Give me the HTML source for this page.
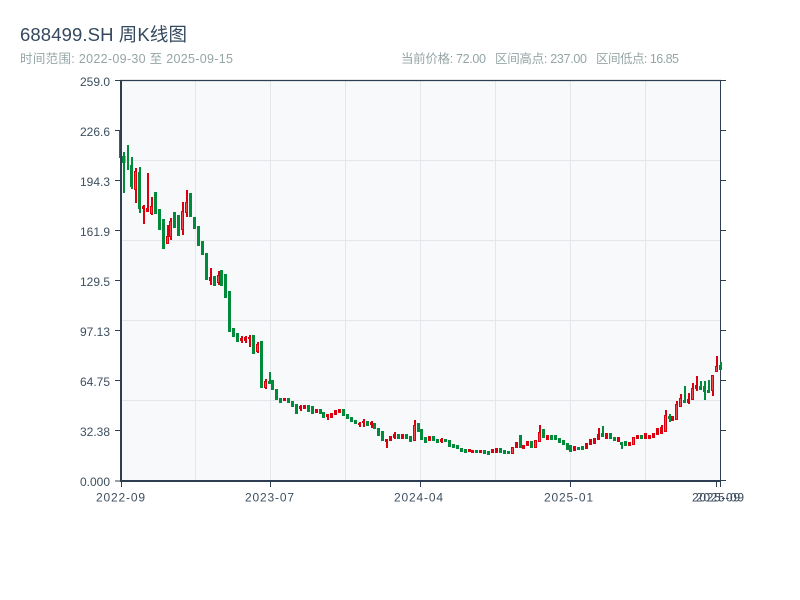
<!DOCTYPE html>
<html lang="zh">
<head>
<meta charset="utf-8">
<title>688499.SH 周K线图</title>
<style>
html,body{margin:0;padding:0;background:#fff;width:800px;height:600px;overflow:hidden}
svg{display:block}
text{font-family:"Liberation Sans","Noto Sans CJK SC",sans-serif}
</style>
</head>
<body>
<svg width="800" height="600" viewBox="0 0 800 600" xmlns="http://www.w3.org/2000/svg">
<rect x="121" y="81" width="599" height="400" fill="#f7f9fb"/>
<path fill="none" stroke="#e3e6ea" stroke-width="1" d="M121 160.5H720M121 240.5H720M121 320.5H720M121 400.5H720M195.5 81V481M270.5 81V481M345.5 81V481M420.5 81V481M495.5 81V481M570.5 81V481M645.5 81V481"/>

<!-- right axis under candles -->
<path fill="none" stroke="#2c3e50" stroke-width="1" d="M720.5 81V481"/>

<!-- green wicks -->
<path transform="translate(.5 0)" fill="none" stroke="#008a3a" stroke-width="2" d="M123.5 152V193M127.5 145V170M131.5 157V189M139.5 167V213M269.5 372V384M602.5 426V437M621.5 442V449M669.5 414V422M684.5 386V403M700.5 381V390M704.5 381V400M708.5 380V393M720.5 362V370"/>
<!-- green bodies -->
<path fill="none" stroke="#008a3a" stroke-width="3" d="M120.5 130V158M122.5 156V163M124 156V163M131.5 165V187M139.5 172V209M155.5 192V214M159.5 209V230M163.5 219V249M174.5 212V228M178.5 215V236M190.5 193V217M194.5 217V229M198.5 226V246M202.5 241V255M206.5 253V280M214.5 276V286M221.5 270V286M225.5 274V298M229.5 291V332M233.5 328V337M237.5 333V342M253.5 335V354M261.5 341V388M269.5 381V384M272.5 380V390M276.5 389V400M280.5 398V403M288.5 398V403M292.5 401V407M296.5 404V414M308.5 405V412M312.5 406V414M320.5 409V414M323.5 412V418M343.5 409V416M347.5 414V419M351.5 417V422M355.5 420V424M367.5 421V426M374.5 423V429M378.5 428V436M382.5 431V441M398.5 434V439M406.5 434V439M410.5 436V442M418.5 423V432M421.5 429V440M425.5 437V443M433.5 436V441M437.5 439V443M445.5 439V442M449.5 440V447M453.5 444V448M457.5 445V449M461.5 448V452M465.5 449V453M476.5 450V453M484.5 450V454M488.5 451V455M500.5 448V453M504.5 450V454M508.5 451V454M520.5 435V448M531.5 441V448M543.5 429V438M551.5 435V440M555.5 435V440M559.5 438V443M563.5 440V445M567.5 443V450M570.5 445V452M578.5 447V450M582.5 446V450M602.5 433V437M610.5 433V439M614.5 437V441M621.5 442V445M625.5 441V446M641.5 435V439M669.5 416V419M684.5 400V403M700.5 386V390M704.5 386V392M708.5 390V393M720.5 365V370"/>

<!-- red wicks -->
<path transform="translate(.5 0)" fill="none" stroke="#d9000f" stroke-width="2" d="M135.5 168V203M143.5 205V224M147.5 173V212M151.5 197V215M167.5 225V244M170.5 218V240M182.5 202V235M186.5 190V217M210.5 268V285M218.5 271V285M241.5 336V343M245.5 336V343M249.5 335V347M257.5 342V353M265.5 379V389M300.5 405V411M327.5 414V420M359.5 422V427M363.5 419V427M371.5 421V428M386.5 439V448M394.5 432V439M414.5 420V441M441.5 438V443M539.5 425V442M598.5 428V440M661.5 425V434M665.5 410V432M676.5 401V420M680.5 394V407M688.5 393V404M692.5 383V400M696.5 376V391M712.5 375V396M716.5 356V372"/>
<!-- red bodies -->
<path fill="none" stroke="#d9000f" stroke-width="3" d="M135.5 171V190M143.5 206V209M147.5 208V212M151.5 206V214M167.5 236V244M170.5 221V237M182.5 211V230M186.5 202V213M210.5 277V281M218.5 275V283M241.5 338V341M245.5 337V341M249.5 337V339M257.5 344V352M265.5 381V388M284.5 398V401M300.5 406V409M304.5 405V409M316.5 409V413M327.5 414V417M331.5 413V418M335.5 410V415M339.5 409V413M359.5 423V425M363.5 421V423M371.5 422V425M386.5 439V442M390.5 436V441M394.5 434V438M402.5 434V439M414.5 425V441M429.5 436V441M441.5 439V442M469.5 449V452M472.5 450V453M480.5 450V453M492.5 449V453M496.5 448V453M512.5 447V454M516.5 442V448M523.5 445V449M527.5 441V446M535.5 440V448M539.5 432V442M547.5 435V440M574.5 446V451M586.5 443V449M590.5 439V445M594.5 438V444M598.5 434V440M606.5 433V439M618.5 437V442M629.5 442V446M633.5 437V445M637.5 435V439M645.5 433V439M649.5 435V439M653.5 433V438M657.5 428V435M661.5 427V434M665.5 415V432M672.5 416V421M676.5 404V420M680.5 398V407M688.5 399V403M692.5 388V400M696.5 385V389M712.5 375V391M716.5 366V372"/>
<!-- red body highlights -->
<path fill="none" stroke="#ee4a4f" stroke-width="1" d="M135.5 172V189M151.5 207V213M167.5 237V243M170.5 222V236M182.5 212V229M186.5 203V212M218.5 276V282M257.5 345V351M265.5 382V387M414.5 426V440M512.5 448V453M535.5 441V447M539.5 433V441M633.5 438V444M665.5 416V431M676.5 405V419M680.5 399V406M692.5 389V399M712.5 376V390M716.5 367V371"/>

<!-- axes -->
<path fill="none" stroke="#2c3e50" stroke-width="1.2" d="M120 80.5H721"/>
<path fill="none" stroke="#2c3e50" stroke-width="2" d="M121 80V482M120 481H721"/>
<path fill="none" stroke="#2c3e50" stroke-width="1" d="M115 80.5H120M115 130.5H120M115 180.5H120M115 230.5H120M115 280.5H120M115 330.5H120M115 380.5H120M115 430.5H120M115 481H120M721 80.5H726M721 130.5H726M721 180.5H726M721 230.5H726M721 280.5H726M721 330.5H726M721 380.5H726M721 430.5H726M721 480.5H726M121.5 482V487M270.5 482V487M420.5 482V487M570.5 482V487M716.5 482V487M720.5 482V487"/>

<!-- header -->
<text x="20" y="41" font-size="18.5" fill="#34495e" textLength="167" lengthAdjust="spacing">688499.SH 周K线图</text>
<text x="20" y="63" font-size="12.5" fill="#95a5a6" textLength="213" lengthAdjust="spacing">时间范围: 2022-09-30 至 2025-09-15</text>
<text x="401" y="63" font-size="12.5" fill="#95a5a6" textLength="85" lengthAdjust="spacing">当前价格: 72.00</text>
<text x="495" y="63" font-size="12.5" fill="#95a5a6" textLength="92" lengthAdjust="spacing">区间高点: 237.00</text>
<text x="596" y="63" font-size="12.5" fill="#95a5a6" textLength="83" lengthAdjust="spacing">区间低点: 16.85</text>

<!-- y labels -->
<g font-size="12" fill="#3d4f60" text-anchor="end">
<text x="110" y="86">259.0</text>
<text x="110" y="136">226.6</text>
<text x="110" y="186">194.3</text>
<text x="110" y="236">161.9</text>
<text x="110" y="286">129.5</text>
<text x="110" y="336">97.13</text>
<text x="110" y="386">64.75</text>
<text x="110" y="436">32.38</text>
<text x="110" y="486">0.000</text>
</g>
<!-- x labels -->
<g font-size="12" fill="#3d4f60">
<text x="96" y="501.5" textLength="49" lengthAdjust="spacing">2022-09</text>
<text x="245" y="501.5" textLength="49" lengthAdjust="spacing">2023-07</text>
<text x="394" y="501.5" textLength="49" lengthAdjust="spacing">2024-04</text>
<text x="544" y="501.5" textLength="49" lengthAdjust="spacing">2025-01</text>
<text x="692" y="501.5" textLength="48" lengthAdjust="spacing">2025-09</text>
<text x="696" y="501.5" textLength="48" lengthAdjust="spacing">2025-09</text>
</g>
</svg>
</body>
</html>
